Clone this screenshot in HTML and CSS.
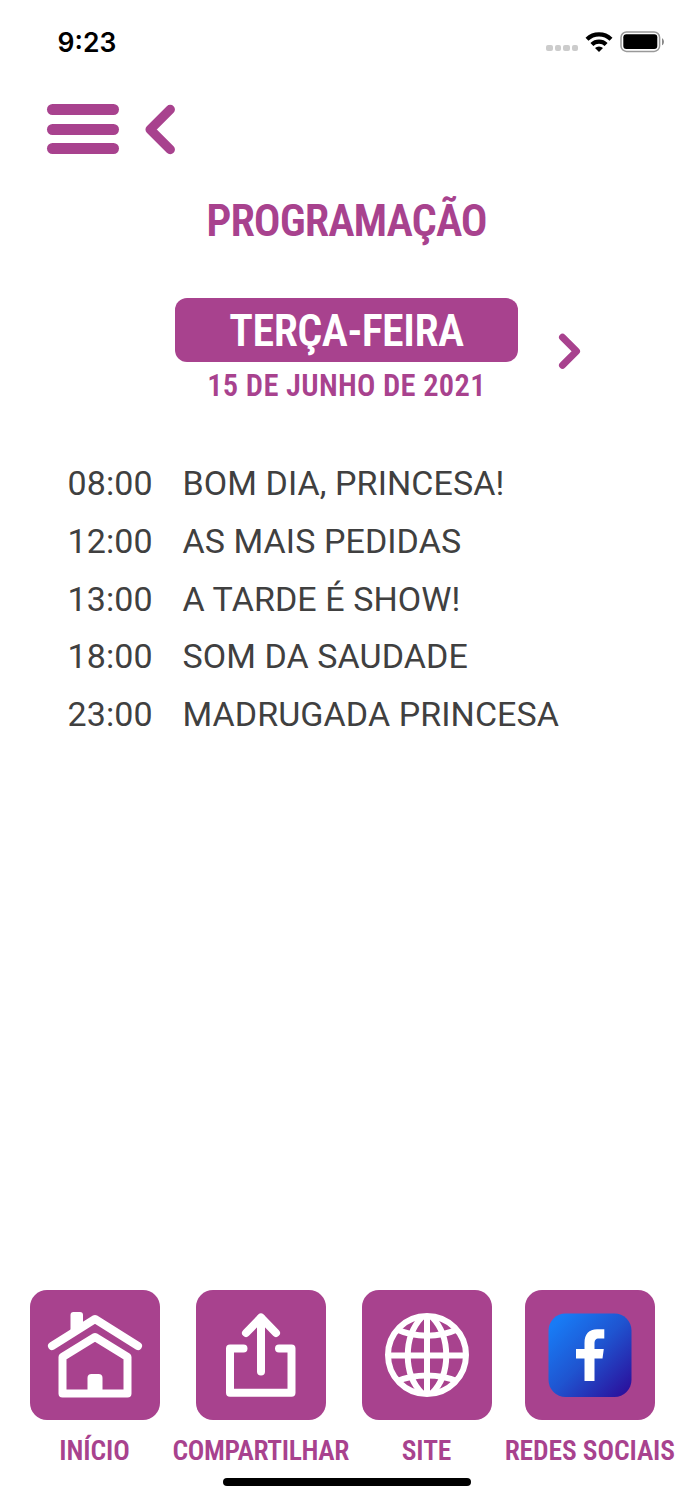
FILE: index.html
```html
<!DOCTYPE html>
<html lang="pt-BR">
<head>
    <meta charset="UTF-8">
    <meta name="viewport" content="width=device-width, initial-scale=1.0">
    <title>Programação</title>
    <link rel="stylesheet" href="styles.css">
</head>
<body>

    <div class="screen">
        <div class="status-bar">
            <span class="clock">9:23</span>
            <div class="status-icons">
                <div class="signal"><i></i><i></i><i></i><i></i></div>
                <svg class="wifi" width="28" height="21" viewBox="0 0 28 21">
                    <g fill="none" stroke="#000" stroke-width="4.2">
                        <path d="M2 7.2a17.2 17.2 0 0 1 24 0"/>
                        <path d="M6.9 12.6a10.2 10.2 0 0 1 14.2 0"/>
                    </g>
                    <path d="M14 20l-4-4a5.800 5.800 0 0 1 8 0z"/>
                </svg>
                <svg width="46" height="22" viewBox="0 0 46 22">
                    <rect x="1" y="1" width="38.6" height="19.4" rx="5.5" fill="none" stroke="#999" stroke-width="1.5"/>
                    <rect x="3.3" y="3.3" width="34" height="14.8" rx="3" fill="#000"/>
                    <path d="M42 7.2c2.6 1 2.6 6 0 7z" fill="#888"/>
                </svg>
            </div>
        </div>

        <header class="toolbar">
            <button class="btn btn-menu"><span></span><span></span><span></span></button>
            <button class="btn">
                <svg width="31" height="51" viewBox="0 0 31 51">
                    <path d="M25.2 5.5l-20 20 20 20" class="chevron" stroke-width="9.5"/>
                </svg>
            </button>
        </header>

        <h1 class="title">PROGRAMAÇÃO</h1>

        <div class="day-picker">
            <div class="day">
                <div class="weekday">TERÇA-FEIRA</div>
                <div class="date">15 DE JUNHO DE 2021</div>
            </div>
            <button class="btn">
                <svg width="23" height="37" viewBox="0 0 23 37">
                    <path d="M4.500 4.2l14 14-14 14" class="chevron" stroke-width="7"/>
                </svg>
            </button>
        </div>

        <ul class="schedule">
            <li><span class="time">08:00</span><span>BOM DIA, PRINCESA!</span></li>
            <li><span class="time">12:00</span><span>AS MAIS PEDIDAS</span></li>
            <li><span class="time">13:00</span><span>A TARDE É SHOW!</span></li>
            <li><span class="time">18:00</span><span>SOM DA SAUDADE</span></li>
            <li><span class="time">23:00</span><span>MADRUGADA PRINCESA</span></li>
        </ul>

        <nav class="bottom-nav">
            <a class="nav-item">
                <svg class="tile" viewBox="0 0 130 130">
                    <g fill="none" stroke="#fff" stroke-width="8" stroke-linecap="round" stroke-linejoin="round">
                        <path d="M22 56L65 29l43 27"/>
                        <path d="M32.500 67V103.500H97.500V67L65 47z"/>
                    </g>
                    <path d="M40.500 43V25a3 3 0 0 1 3-3h6.500a3 3 0 0 1 3 3v12z" fill="#fff"/>
                    <path d="M57.500 102V88a4 4 0 0 1 4-4h7a4 4 0 0 1 4 4v14z" fill="#fff"/>
                </svg>
                <span class="label">INÍCIO</span>
            </a>
            <a class="nav-item">
                <svg class="tile" viewBox="0 0 130 130">
                    <g fill="none" stroke="#fff" stroke-width="8" stroke-linecap="round" stroke-linejoin="round">
                        <path d="M65 81.500V28"/>
                        <path d="M50 43l15-15.500 15 15.500"/>
                        <path d="M47.500 58.500H34v44.300h61.500V58.500H83"/>
                    </g>
                </svg>
                <span class="label label-tight">COMPARTILHAR</span>
            </a>
            <a class="nav-item">
                <svg class="tile" viewBox="0 0 130 130">
                    <g fill="none" stroke="#fff" stroke-width="6">
                        <circle cx="65" cy="65" r="39"/>
                        <path d="M65 26v78M26 65.500h78"/>
                        <path d="M60 27C41 47 41 84 60 103M70 27c19 20 19 57 0 76"/>
                        <path d="M34 39c19 9 43 9 62 0M34 91.500c19-8 43-8 62 0"/>
                    </g>
                </svg>
                <span class="label">SITE</span>
            </a>
            <a class="nav-item">
                <svg class="tile" viewBox="0 0 130 130">
                    <defs>
                        <linearGradient id="fb" x1="0" y1="0" x2="1" y2="1">
                            <stop offset="0.1" stop-color="#187bf5"/>
                            <stop offset="0.5" stop-color="#1f54d0"/>
                            <stop offset="0.95" stop-color="#2b109c"/>
                        </linearGradient>
                    </defs>
                    <rect x="23.500" y="23.500" width="83" height="83.500" rx="17" fill="url(#fb)"/>
                    <path d="M59.500 91V68.500H51V59h8.500v-6C59.500 44 64 39.200 72 39.200h7.300v9.300H74c-3.500 0-4.500 2-4.500 5V59h9.300l-1.300 9.500h-8V91z" fill="#fff"/>
                </svg>
                <span class="label">REDES SOCIAIS</span>
            </a>
        </nav>

        <div class="home-indicator"></div>
    </div>

</body>
</html>
```
FILE: styles.css
```css
* {
    box-sizing: border-box;
}
body {
    margin: 0;
    background: white;
    font-family: "Roboto Condensed", Roboto, sans-serif;
    color: #a8428e;
}
.screen {
    width: 693px;
    height: 1500px;
    display: flex;
    flex-direction: column;
    overflow: hidden;
}
.status-bar {
    display: flex;
    justify-content: space-between;
    align-items: center;
    height: 84px;
    padding: 0 27px 0 57.5px;
    color: #000;
}
.clock {
    font-family: Inter, sans-serif;
    font-size: 26.5px;
    font-weight: 600;
}
.status-icons {
    display: flex;
    align-items: center;
}
.signal {
    display: flex;
    gap: 2px;
    margin: 12px 7px 0 0;
}
.signal i {
    width: 6.5px;
    height: 6.5px;
    border-radius: 2px;
    background: #ccc;
}
.wifi {
    margin-right: 7px;
}
.toolbar {
    display: flex;
    align-items: flex-start;
    gap: 26px;
    height: 108px;
    padding: 20px 47px 0;
}
.btn {
    padding: 0;
    border: none;
    background: none;
    cursor: pointer;
}
.btn svg {
    display: block;
}
.btn-menu {
    display: flex;
    flex-direction: column;
    gap: 8.5px;
    width: 72px;
}
.btn-menu span {
    width: 100%;
    height: 11px;
    border-radius: 6px;
    background: #a8428e;
}
.chevron {
    fill: none;
    stroke: #a8428e;
    stroke-linecap: round;
    stroke-linejoin: round;
}
.title {
    margin: 0;
    font-size: 44.5px;
    font-weight: 650;
    line-height: 59px;
    letter-spacing: -1px;
    text-align: center;
}
.day-picker {
    display: grid;
    grid-template-columns: 343px auto;
    justify-content: start;
    align-items: center;
    gap: 39.5px;
    margin-top: 47px;
    padding-left: 175px;
    font-weight: 650;
    text-align: center;
}
.weekday {
    height: 64px;
    border-radius: 12px;
    background: #a8428e;
    color: white;
    font-size: 44px;
    line-height: 67px;
    letter-spacing: -0.5px;
}
.date {
    margin-top: 5px;
    font-size: 30.5px;
    line-height: 37px;
    letter-spacing: 0.3px;
}
.schedule {
    list-style: none;
    margin: 51px 0 0;
    padding: 0 0 0 67.5px;
    font-family: Roboto, sans-serif;
    font-size: 34px;
    line-height: 57.8px;
    letter-spacing: 0.08px;
    color: #404040;
}
.schedule li {
    display: flex;
}
.time {
    width: 115px;
}
.bottom-nav {
    display: grid;
    grid-template-columns: 166px 166.5px 165px 161.5px;
    justify-items: center;
    margin-top: auto;
    padding-left: 11.5px;
}
.nav-item {
    display: flex;
    flex-direction: column;
    align-items: center;
    width: 130px;
}
.tile {
    width: 130px;
    height: 130px;
    border-radius: 17px;
    background: #a8428e;
}
.label {
    margin-top: 13px;
    font-size: 27.5px;
    font-weight: 650;
    line-height: 36px;
    letter-spacing: -0.1px;
    white-space: nowrap;
}
.label-tight {
    letter-spacing: -0.35px;
}
.home-indicator {
    width: 248px;
    height: 8px;
    margin: 9px 0 14px 222.5px;
    border-radius: 4px;
    background: #000;
}
```
